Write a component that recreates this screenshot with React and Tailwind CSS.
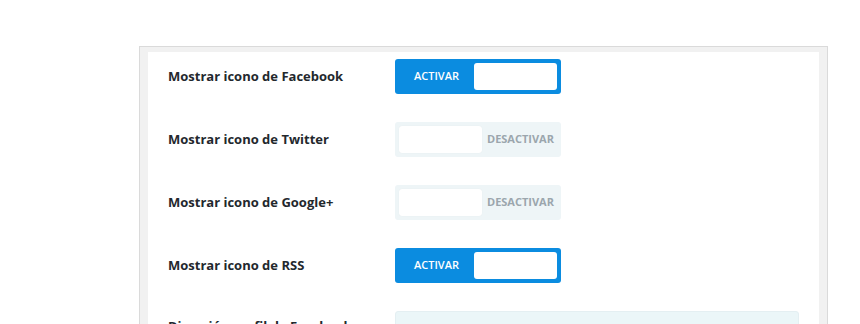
import React from "react";

function Toggle({ on }) {
  if (on) {
    return (
      <div className="flex h-[35px] w-[166px] items-center rounded-[3px] bg-[#0b8ce0] p-[4px]">
        <span className="flex-1 pl-[15px] text-[11px] font-semibold uppercase text-white">Activar</span>
        <div className="h-[27px] w-[83px] rounded-[3px] bg-white" />
      </div>
    );
  }
  return (
    <div className="flex h-[35px] w-[166px] items-center rounded-[3px] bg-[#eef5f7] p-[4px]">
      <div className="h-[27px] w-[83px] rounded-[3px] bg-white shadow-[0_0_1px_rgba(0,0,0,0.08)]" />
      <span className="pl-[5px] text-[11px] font-bold uppercase text-[#9ba6ad]">Desactivar</span>
    </div>
  );
}

function Row({ label, on }) {
  return (
    <div className="flex items-center">
      <div className="w-[227px] text-[13px] font-bold text-[#23282d]">{label}</div>
      <Toggle on={on} />
    </div>
  );
}

export default function App() {
  return (
    <div className="h-[324px] w-[860px] overflow-hidden bg-white pt-[46px] pl-[139px]" style={{ fontFamily: '"Open Sans", "Liberation Sans", sans-serif' }}>
      <div className="h-[400px] w-[689px] border border-[#dadada] bg-[#f1f1f1] px-[8px] pt-[5px]">
        <div className="h-full bg-white pl-[20px] pt-[7px]">
          <div className="flex flex-col gap-[28px]">
            <Row label="Mostrar icono de Facebook" on />
            <Row label="Mostrar icono de Twitter" />
            <Row label="Mostrar icono de Google+" />
            <Row label="Mostrar icono de RSS" on />
            <div className="flex items-start">
              <div className="w-[227px] pt-[6px] text-[13px] font-bold text-[#23282d]">Dirección perfil de Facebook</div>
              <div className="h-[35px] w-[404px] rounded-[3px] border border-[#e4eff2] bg-[#ebf6f8]" />
            </div>
          </div>
        </div>
      </div>
    </div>
  );
}
